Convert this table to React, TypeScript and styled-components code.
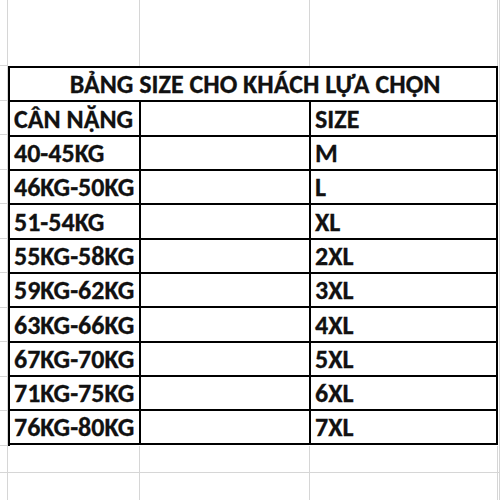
import React from "react";
import styled, { createGlobalStyle } from "styled-components";

const Global = createGlobalStyle`
  html, body { margin: 0; padding: 0; background: #ffffff; }
  #root { width: 500px; height: 500px; }
`;

const GRID = "#d6d6d6";
const FONT = `Carlito, Lato, "Open Sans", "Liberation Sans", sans-serif`;

const Sheet = styled.div`
  width: 500px;
  height: 500px;
  overflow: hidden;
  display: grid;
  grid-template-columns: 8px 132px 170px 188px 2px;
  grid-template-rows: 66px repeat(11, 34.5px) 27.5px 1fr;
  background: #fff;
`;

const GridCell = styled.div<{ $noBottom?: boolean }>`
  box-sizing: border-box;
  border-right: 1px solid ${GRID};
  border-bottom: ${(p) => (p.$noBottom ? "none" : `1px solid ${GRID}`)};
`;

const SizeTable = styled.div`
  grid-column: 2 / 5;
  grid-row: 2 / 13;
  display: grid;
  grid-template-columns: 131px 170px 1fr;
  grid-template-rows: repeat(11, 1fr);
  box-sizing: border-box;
  border-top: 2px solid #000;
  border-left: 2px solid #000;
  font-family: ${FONT};
  font-weight: 700;
  color: #111;
`;

const TCell = styled.div<{ $span?: boolean; $center?: boolean }>`
  box-sizing: border-box;
  border-right: 2px solid #000;
  border-bottom: 2px solid #000;
  grid-column: ${(p) => (p.$span ? "1 / -1" : "auto")};
  display: flex;
  align-items: flex-end;
  justify-content: ${(p) => (p.$center ? "center" : "flex-start")};
  padding: 0 0 3px 4px;
  font-size: 26px;
  line-height: 26px;
  white-space: nowrap;
  -webkit-text-stroke: 0.3px #111;
`;

const rows: [string, string][] = [
  ["CÂN NẶNG", "SIZE"],
  ["40-45KG", "M"],
  ["46KG-50KG", "L"],
  ["51-54KG", "XL"],
  ["55KG-58KG", "2XL"],
  ["59KG-62KG", "3XL"],
  ["63KG-66KG", "4XL"],
  ["67KG-70KG", "5XL"],
  ["71KG-75KG", "6XL"],
  ["76KG-80KG", "7XL"],
];

export default function App() {
  const topRow = [0, 1, 2, 3, 4];
  return (
    <>
      <Global />
      <Sheet>
        {topRow.map((i) => (
          <GridCell key={`t${i}`} $noBottom={i !== 0} />
        ))}
        {Array.from({ length: 11 }).map((_, r) => (
          <GridCell key={`s${r}`} style={{ gridColumn: 1, gridRow: r + 2 }} />
        ))}
        <SizeTable>
          <TCell $span $center>
            BẢNG SIZE CHO KHÁCH LỰA CHỌN
          </TCell>
          {rows.map(([w, s]) => (
            <React.Fragment key={w}>
              <TCell>{w}</TCell>
              <TCell />
              <TCell>{s}</TCell>
            </React.Fragment>
          ))}
        </SizeTable>
        {Array.from({ length: 11 }).map((_, r) => (
          <GridCell key={`e${r}`} style={{ gridColumn: 5, gridRow: r + 2 }} $noBottom />
        ))}
        {topRow.map((i) => (
          <GridCell key={`b${i}`} />
        ))}
        {topRow.map((i) => (
          <GridCell key={`c${i}`} $noBottom />
        ))}
      </Sheet>
    </>
  );
}
